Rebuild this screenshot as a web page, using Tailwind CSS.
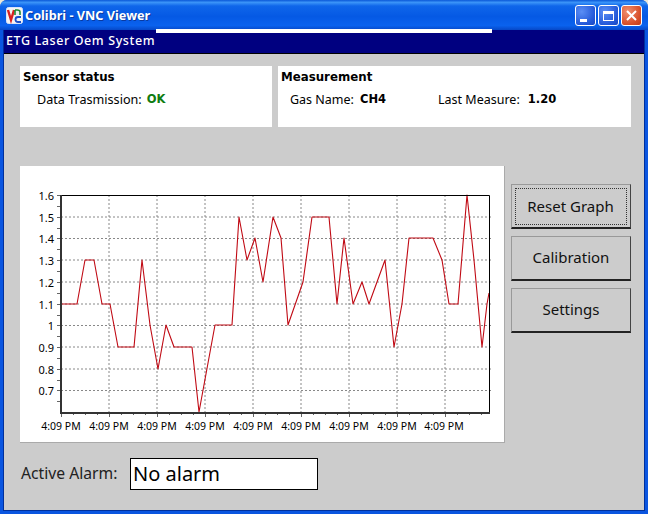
<!DOCTYPE html>
<html lang="en">
<head>
  <meta charset="UTF-8" />
  <title>Colibri - VNC Viewer</title>
  <script src="https://cdn.jsdelivr.net/npm/@tailwindcss/browser@4"></script>
</head>
<body class="bg-[#ece9d8] font-['Noto_Sans',sans-serif]">
  <div class="relative w-[648px] h-[514px] flex flex-col overflow-hidden rounded-t-[7px] bg-[#0a55e0]">

    <!-- title bar -->
    <div class="h-[30px] shrink-0 flex items-center pl-[6px] pr-[6px] pt-[1px] bg-[linear-gradient(180deg,#0a58d8_0%,#3b94f8_8%,#0f66ea_20%,#0559e4_55%,#0a62ee_85%,#0648c8_100%)]">
      <svg width="17" height="17" viewBox="0 0 17 17" class="shrink-0">
        <rect x="0.5" y="0.5" width="16" height="16" rx="2" fill="#f4f4f4" stroke="#d8e4f8"/>
        <path d="M2 3 L5 13 L8 3" fill="none" stroke="#d82020" stroke-width="2.4"/>
        <rect x="9" y="2" width="6" height="6" fill="#f0f0f0"/>
        <path d="M9 3 v5 M9 3 h2 q3 0 3 2 v3" fill="none" stroke="#1c8c34" stroke-width="1.6"/>
        <path d="M15 10 h-3 q-2.500 0 -2.500 2.500 t2.500 2.500 h3" fill="none" stroke="#1a50c8" stroke-width="1.8"/>
      </svg>
      <span class="ml-[2px] text-white text-[12.700px] font-bold leading-none [text-shadow:1px_1px_0_#0a3aa0]">Colibri - VNC Viewer</span>

      <div class="ml-auto flex gap-[2px]">
        <div class="relative w-[21px] h-[21px] rounded-[3px] border border-white bg-[radial-gradient(circle_at_30%_30%,#5a8ef5,#2358d8_70%,#1a48c0)]">
          <div class="absolute left-[4px] bottom-[3px] w-[7px] h-[3px] bg-white"></div>
        </div>
        <div class="w-[21px] h-[21px] rounded-[3px] border border-white bg-[radial-gradient(circle_at_30%_30%,#5a8ef5,#2358d8_70%,#1a48c0)] flex items-center justify-center">
          <div class="w-[11px] h-[10px] border border-white border-t-[3px]"></div>
        </div>
        <div class="w-[21px] h-[21px] rounded-[3px] border border-white bg-[radial-gradient(circle_at_30%_30%,#f09070,#d8502a_65%,#c03a18)] flex items-center justify-center">
          <svg width="13" height="13" viewBox="0 0 13 13"><path d="M2 2 L11 11 M11 2 L2 11" stroke="#fff" stroke-width="2"/></svg>
        </div>
      </div>
    </div>

    <!-- stray strip left by the remote screen -->
    <div class="absolute left-[156px] top-[29px] w-[336px] h-[4px] bg-white"></div>

    <!-- client area -->
    <div class="flex-1 mx-[3px] mb-[3px] flex flex-col bg-[#cccccc] border border-t-0 border-[#00309c]">
      <div class="h-[24px] shrink-0 bg-[#000080] border-b border-black flex items-center pl-[2px]">
        <span class="text-white text-[12.500px] font-medium leading-none tracking-[0.6px]">ETG Laser Oem System</span>
      </div>

      <div class="flex gap-[6px] mt-[12px] ml-[16px] text-black">
        <div class="w-[252px] h-[61px] bg-white pl-[3px] pt-[4px]">
          <div class="font-['DejaVu_Sans',sans-serif] text-[11.800px] font-bold leading-[15px]">Sensor status</div>
          <div class="mt-[7px] ml-[14px] flex gap-[5px] text-[12.600px] leading-[15px]">
            <span>Data Trasmission:</span><span class="font-['DejaVu_Sans',sans-serif] text-[11.500px] font-bold text-[#107c10]">OK</span>
          </div>
        </div>
        <div class="w-[353px] h-[61px] bg-white pl-[3px] pt-[4px]">
          <div class="font-['DejaVu_Sans',sans-serif] text-[11.800px] font-bold leading-[15px]">Measurement</div>
          <div class="mt-[7px] ml-[9px] flex text-[12.500px] leading-[15px]">
            <span>Gas Name:</span><span class="ml-[6px] font-['DejaVu_Sans',sans-serif] text-[11.500px] font-bold">CH4</span>
            <span class="ml-[52px]">Last Measure:</span><span class="ml-[8px] font-['DejaVu_Sans',sans-serif] text-[11.500px] font-bold">1.20</span>
          </div>
        </div>
      </div>

      <div class="flex mt-[39px] ml-[16px]">
        <div class="w-[485px] h-[277px] bg-white border-b border-r border-[#aaaaaa]">
          <svg width="484" height="276" viewBox="20 166 484 276" class="block" font-family="'Noto Sans', sans-serif" font-size="10.500" fill="#000">
            <!-- grid -->
            <path d="M109 195V412M157 195V412M205 195V412M253 195V412M301 195V412M349 195V412M397 195V412M445 195V412" stroke="#888" stroke-dasharray="2 2" fill="none"/>
            <path d="M61 217H492M61 238.500H492M61 260H492M61 282H492M61 304H492M61 325.500H492M61 347H492M61 369H492M61 390.500H492" stroke="#888" stroke-dasharray="2 2" fill="none"/>
            <!-- ticks -->
            <path d="M57 195.500h4M57 206.500h4M57 217.500h4M57 228.500h4M57 238.500h4M57 249.500h4M57 260.500h4M57 271.500h4M57 282.500h4M57 293.500h4M57 304.500h4M57 315.500h4M57 325.500h4M57 336.500h4M57 347.500h4M57 358.500h4M57 369.500h4M57 380.500h4M57 390.500h4M57 401.500h4" stroke="#666" fill="none"/>
            <path d="M61.500 412v5M73.500 412v3M85.500 412v3M97.500 412v3M109.500 412v5M121.500 412v3M133.500 412v3M145.500 412v3M157.500 412v5M169.500 412v3M181.500 412v3M193.500 412v3M205.500 412v5M217.500 412v3M229.500 412v3M241.500 412v3M253.500 412v5M265.500 412v3M277.500 412v3M289.500 412v3M301.500 412v5M313.500 412v3M325.500 412v3M337.500 412v3M349.500 412v5M361.500 412v3M373.500 412v3M385.500 412v3M397.500 412v5M409.500 412v3M421.500 412v3M433.500 412v3M445.500 412v5M457.500 412v3M469.500 412v3M481.500 412v3" stroke="#666" fill="none"/>
            <!-- series -->
            <polyline fill="none" stroke="#c00a14" stroke-width="1.100" stroke-linejoin="round" points="61,304 77,304 85,260 94,260 102,304 110,304 118,347 134,347 142,260 150,325 158,369 166,325 174,347 192,347 199,412 215,325 232,325 239,217 247,260 255,238 263,282 273,217 281,238 288,325 303,282 312,217 329,217 337,304 344,238 353,304 362,282 369,304 385,260 394,347 402,304 409,238 433,238 442,260 449,304 458,304 467,195 474,260 482,347 487,304 489,293"/>
            <!-- axes -->
            <path d="M61 195.500H489.500V412" stroke="#000" fill="none"/>
            <path d="M61 195V413H490" stroke="#333" stroke-width="2" fill="none"/>
            <g text-anchor="end" font-size="11">
              <text x="54" y="200">1.6</text><text x="54" y="222">1.5</text><text x="54" y="243">1.4</text><text x="54" y="265">1.3</text><text x="54" y="287">1.2</text><text x="54" y="309">1.1</text><text x="54" y="330">1</text><text x="54" y="352">0.9</text><text x="54" y="374">0.8</text><text x="54" y="395">0.7</text>
            </g>
            <g text-anchor="middle">
              <text x="61" y="430">4:09 PM</text><text x="109" y="430">4:09 PM</text><text x="157" y="430">4:09 PM</text><text x="205" y="430">4:09 PM</text><text x="253" y="430">4:09 PM</text><text x="301" y="430">4:09 PM</text><text x="349" y="430">4:09 PM</text><text x="397" y="430">4:09 PM</text><text x="444" y="430">4:09 PM</text>
            </g>
          </svg>
        </div>

        <div class="ml-[6px] mt-[18px] flex flex-col gap-[7px] w-[120px] text-[15px] text-[#111]">
          <button class="h-[45px] pb-[2px] bg-[#cccccc] border border-[#999999] border-b-2 border-b-[#222222] border-r-[#444444] px-[3px] pt-[3px]">
            <span class="flex h-full items-center justify-center border border-dotted border-[#333333] pb-[1px] pr-[1px]">Reset Graph</span>
          </button>
          <button class="h-[45px] pb-[2px] bg-[#cccccc] border border-[#999999] border-b-2 border-b-[#222222] border-r-[#444444]">Calibration</button>
          <button class="h-[45px] pb-[2px] bg-[#cccccc] border border-[#999999] border-b-2 border-b-[#222222] border-r-[#444444]">Settings</button>
        </div>
      </div>

      <div class="flex items-center mt-[15px] ml-[17px]">
        <span class="w-[109px] text-[15.700px] text-[#222] leading-none">Active Alarm:</span>
        <div class="w-[188px] h-[32px] bg-white border border-black flex items-center pl-[2px] text-[20px] leading-none text-black">No alarm</div>
      </div>
    </div>
  </div>
</body>
</html>
